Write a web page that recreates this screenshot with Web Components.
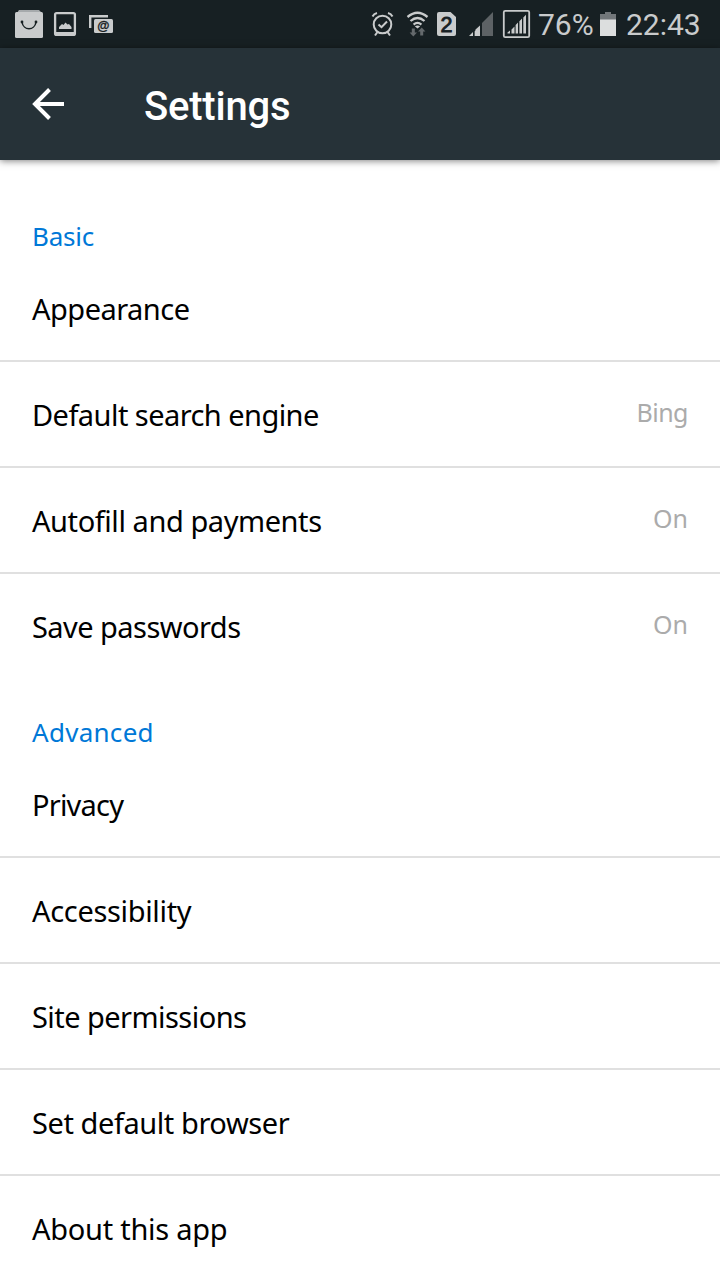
<!DOCTYPE html>
<html lang="en">
<head>
<meta charset="utf-8">
<title>Settings</title>
<style>
html,body{margin:0;background:#fff}
body{width:720px;height:1280px;overflow:hidden}
</style>
</head>
<body>
<settings-screen></settings-screen>
<script>
const define = (name, html) => {
  const t = document.createElement('template');
  t.innerHTML = html;
  customElements.define(name, class extends HTMLElement {
    constructor() {
      super();
      this.attachShadow({mode: 'open'}).append(t.content.cloneNode(true));
    }
  });
};

define('status-bar', `
<style>
:host{display:flex;align-items:center;height:48px;box-sizing:border-box;background:#172023;color:#c9cbcc;font:30px/48px Roboto,sans-serif}
svg{display:block;flex:none}
text{font-family:"Liberation Sans",sans-serif;font-weight:bold;fill:#172023;text-anchor:middle}
.gap{flex:1}
.pct{width:56px;margin-left:7px;white-space:nowrap}
.time{width:75px;margin-left:10px;white-space:nowrap}
.pct,.time{padding-top:2px;line-height:46px}
</style>
<svg width="130" height="48" viewBox="0 0 130 48">
  <path d="M17 13l2-3h20l3 3z" fill="#a6aaac"/>
  <rect x="15" y="12" width="28" height="26" rx="1.500" fill="#c9cbcc"/>
  <path d="M22 22c1.300 9 12.700 9 14 0" fill="none" stroke="#172023" stroke-width="1.500"/>
  <circle cx="22" cy="22" r="1.400" fill="#172023"/><circle cx="36" cy="22" r="1.400" fill="#172023"/>
  <rect x="55.100" y="13.100" width="19.800" height="21.800" rx="1.500" fill="none" stroke="#c9cbcc" stroke-width="2.300"/>
  <path d="M59 29v-2l3-3 1.500 1 2-2.500 2 2 1.500-.5 2.500 3v2z" fill="#c9cbcc"/>
  <path d="M56 32h18v2.500h-18z" fill="#c9cbcc"/>
  <path d="M90.200 28V16.200h17.800" fill="none" stroke="#c9cbcc" stroke-width="2.400"/>
  <rect x="94" y="19" width="19" height="14" rx="1.500" fill="#c9cbcc"/>
  <text x="103.300" y="29.700" font-size="12.500" stroke="#172023" stroke-width=".3">@</text>
</svg>
<span class="gap"></span>
<svg width="162" height="48" viewBox="369 0 162 48">
  <g fill="none" stroke="#c9cbcc" stroke-width="2">
    <circle cx="382.500" cy="24.500" r="8.800"/>
    <path d="M378.500 24.500l3 2.700 5.500-5.700"/>
    <path d="M372.500 16.500c1-2 2.500-3 4.500-3.500M392.500 16.500c-1-2-2.500-3-4.500-3.500M377.500 32l-2.500 3.500M387.500 32l2.500 3.500"/>
    <path d="M407.500 17q10-8.500 20 0M410.500 21q7-6 14 0M413.600 24.600q3.900-3.500 7.800 0" stroke-width="2.300"/>
  </g>
  <path d="M414.800 26.200q2.700-1.400 5.400 0l-2.700 2.400z" fill="#c9cbcc"/>
  <path d="M411.800 28.500h3v4h2.200l-3.700 4-3.700-4h2.200zM420.200 35.500h3v-4h2.200l-3.700-4-3.700 4h2.200z" fill="#64696c"/>
  <path d="M439 12h11.500l5.500 5v17q0 2-2 2h-15q-2 0-2-2V14q0-2 2-2z" fill="#c9cbcc"/>
  <text x="446.500" y="31.700" font-size="21.500" style="font-weight:400" stroke="#172023" stroke-width=".9">2</text>
  <path d="M469 36l4-4v4zM474.300 31.500l3.700-3.500v8h-3.700zM475.500 29.500l4.500-4v10.500h-4.500z" fill="#c9cbcc"/>
  <path d="M474 30v6" stroke="#172023"/><path d="M482 23l11-11v24h-11z" fill="#5d6265"/>
  <rect x="503.800" y="10.800" width="25.400" height="26.400" rx="1.500" fill="none" stroke="#c9cbcc" stroke-width="1.800"/>
  <path d="M507.500 33.500v-1l2.500-2v3zM511.500 33.500v-4l3-3v7zM515.600 33.500v-8.500l2.400-2.400v10.900zM519.400 33.500V21.300l2.600-2.700v14.900zM523.300 33.500v-16l2.700-2.800v18.800z" fill="#c9cbcc"/>
</svg>
<span class="pct">76%</span>
<svg width="16" height="48" viewBox="0 0 16 48" style="margin-left:6px"><path d="M0 14h5v-2h6v2h5v6H0z" fill="#72777a"/><path d="M0 19.500h16V36H0z" fill="#dcdede"/></svg>
<span class="time">22:43</span>
<span style="width:19px"></span>
`);

define('app-bar', `
<style>
:host{display:flex;align-items:center;height:112px;box-sizing:border-box;padding-left:32px;background:#263238;color:#fff;box-shadow:0 1px 7px rgba(0,0,0,.5);font:500 40px/106px Roboto,sans-serif}
svg{display:block;margin-right:80px}
.title{letter-spacing:-.22px;padding-top:5px}
</style>
<svg width="32" height="32" viewBox="0 0 32 32"><path d="M17.500 1.500L3 16l14.500 14.500M2.500 16H32" fill="none" stroke="#fff" stroke-width="4"/></svg>
<span class="title"><slot></slot></span>
`);

define('settings-section', `
<style>
:host{display:block}
.head{height:72px;box-sizing:border-box;padding:33px 32px 0;color:#0078d7;font:26px/38px "Noto Sans","Open Sans",sans-serif;letter-spacing:var(--track,0)}
:host([first]) .head{height:96px;padding-top:57px}
</style>
<div class="head"><slot name="title"></slot></div>
<slot></slot>
`);

define('settings-row', `
<style>
:host{display:flex;justify-content:space-between;height:106px;box-sizing:border-box;padding:0 32px;border-bottom:2px solid #e0e0e0;color:#000;font:29px/106px "Noto Sans","Open Sans",sans-serif}
:host([last]){border-bottom-color:transparent}
.value{color:#ababab;font-size:25px;line-height:100px;letter-spacing:var(--value-track,0)}
span{white-space:nowrap}
.label{letter-spacing:var(--track,0)}
</style>
<span class="label"><slot></slot></span><span class="value"><slot name="value"></slot></span>
`);

define('settings-screen', `
<style>:host{display:flex;flex-direction:column;width:720px;height:1280px;overflow:hidden;background:#fff}
app-bar{z-index:1}status-bar,app-bar,settings-section{flex:none}</style>
<status-bar></status-bar>
<app-bar>Settings</app-bar>
<settings-section first style="--track:-.25px"><span slot="title">Basic</span>
<settings-row style="--track:-.52px">Appearance</settings-row>
<settings-row style="--track:-.55px;--value-track:-.5px">Default search engine<span slot="value">Bing</span></settings-row>
<settings-row style="--track:-.43px">Autofill and payments<span slot="value">On</span></settings-row>
<settings-row last style="--track:-.55px">Save passwords<span slot="value">On</span></settings-row>
</settings-section>
<settings-section style="--track:.28px"><span slot="title">Advanced</span>
<settings-row style="--track:-.8px">Privacy</settings-row>
<settings-row style="--track:-.33px">Accessibility</settings-row>
<settings-row style="--track:-.55px">Site permissions</settings-row>
<settings-row style="--track:-.43px">Set default browser</settings-row>
<settings-row last style="--track:-.27px">About this app</settings-row>
</settings-section>
`);
</script>
</body>
</html>
